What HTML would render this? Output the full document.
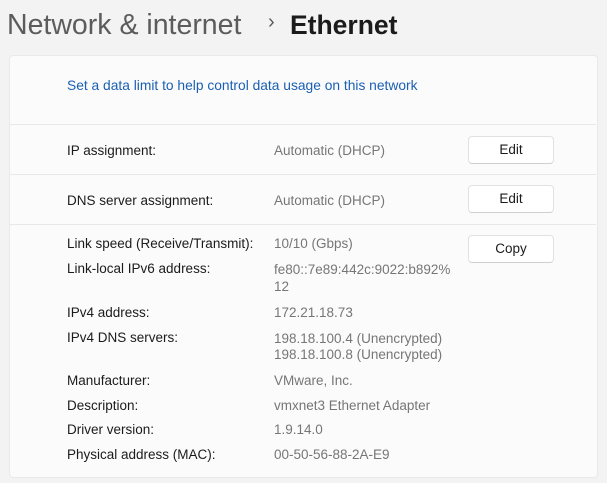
<!DOCTYPE html><html><head><style>
body{margin:0;width:607px;height:483px;background:#f3f3f3;font-family:"Liberation Sans",sans-serif;position:relative;overflow:hidden}
.t{position:absolute;white-space:nowrap;font-size:13.5px;color:#1b1b1b;line-height:16px}
.v{color:#767676}
.card{position:absolute;left:9px;top:55px;width:587px;height:421px;background:#fbfbfb;border:1px solid #e9e9e9;border-radius:4px}
.sep{position:absolute;left:10px;width:586px;height:1px;background:#e8e8e8}
.btn{position:absolute;left:468px;width:86px;height:28px;background:#fff;border:1px solid #e1e1e1;border-bottom-color:#cfcfcf;border-radius:4px;box-sizing:border-box;font-size:13.5px;text-align:center;line-height:26px;color:#1b1b1b}
</style></head><body>
<div style="position:absolute;left:7px;top:8px;font-size:28.5px;line-height:34px;color:#5c5c5c;white-space:nowrap">Network &amp; internet</div>
<div style="position:absolute;left:268px;top:11px;font-size:20px;color:#5c5c5c">›</div>
<div style="position:absolute;left:290px;top:8px;font-size:26.5px;line-height:34px;color:#1b1b1b;font-weight:bold">Ethernet</div>
<div class="card"></div>
<div class="t" style="left:67px;top:78px;color:#1a5fb4;font-size:13.8px">Set a data limit to help control data usage on this network</div>
<div class="sep" style="top:124px"></div>
<div class="sep" style="top:174px"></div>
<div class="sep" style="top:224px"></div>
<div class="t" style="left:67px;top:143px">IP assignment:</div><div class="t v" style="left:274px;top:143px">Automatic (DHCP)</div>
<div class="btn" style="top:136px">Edit</div>
<div class="t" style="left:67px;top:193px">DNS server assignment:</div><div class="t v" style="left:274px;top:193px">Automatic (DHCP)</div>
<div class="btn" style="top:185px">Edit</div>
<div class="btn" style="top:235px">Copy</div>
<div class="t" style="left:67px;top:236px">Link speed (Receive/Transmit):</div><div class="t v" style="left:274px;top:236px">10/10 (Gbps)</div>
<div class="t" style="left:67px;top:261px">Link-local IPv6 address:</div><div class="t v" style="left:274px;top:262px">fe80::7e89:442c:9022:b892%</div>
<div class="t v" style="left:274px;top:279px">12</div>
<div class="t" style="left:67px;top:305px">IPv4 address:</div><div class="t v" style="left:274px;top:305px">172.21.18.73</div>
<div class="t" style="left:67px;top:330px">IPv4 DNS servers:</div><div class="t v" style="left:274px;top:331px">198.18.100.4 (Unencrypted)</div>
<div class="t v" style="left:274px;top:347px">198.18.100.8 (Unencrypted)</div>
<div class="t" style="left:67px;top:373px">Manufacturer:</div><div class="t v" style="left:274px;top:373px">VMware, Inc.</div>
<div class="t" style="left:67px;top:398px">Description:</div><div class="t v" style="left:274px;top:398px">vmxnet3 Ethernet Adapter</div>
<div class="t" style="left:67px;top:422px">Driver version:</div><div class="t v" style="left:274px;top:422px">1.9.14.0</div>
<div class="t" style="left:67px;top:447px">Physical address (MAC):</div><div class="t v" style="left:274px;top:447px">00-50-56-88-2A-E9</div>
</body></html>
